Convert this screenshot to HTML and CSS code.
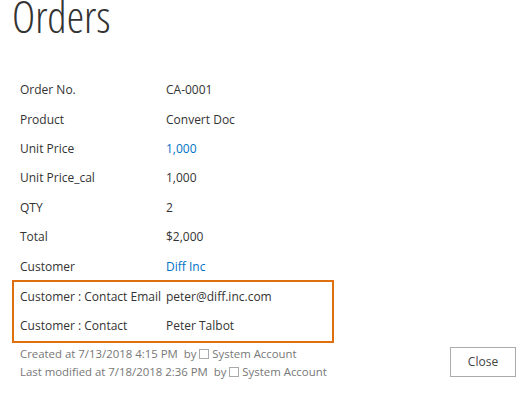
FILE: index.html
```html
<!DOCTYPE html>
<html lang="en">

<head>
  <meta charset="UTF-8">
  <title>Orders</title>
  <link rel="stylesheet" href="styles.css">
</head>

<body>
  <div class="dialog">
    <h1 class="title">Orders</h1>

    <div class="fields">
      <div class="row"><div class="label">Order No.</div><div class="value">CA-0001</div></div>
      <div class="row"><div class="label">Product</div><div class="value">Convert Doc</div></div>
      <div class="row"><div class="label">Unit Price</div><div class="value link">1,000</div></div>
      <div class="row"><div class="label">Unit Price_cal</div><div class="value">1,000</div></div>
      <div class="row"><div class="label">QTY</div><div class="value">2</div></div>
      <div class="row"><div class="label">Total</div><div class="value">$2,000</div></div>
      <div class="row"><div class="label">Customer</div><div class="value link">Diff Inc</div></div>

      <div class="lookup">
        <div class="row"><div class="label">Customer : Contact Email</div><div class="value">peter@diff.inc.com</div></div>
        <div class="row"><div class="label">Customer : Contact</div><div class="value">Peter Talbot</div></div>
      </div>
    </div>

    <div class="footer">
      <div class="meta">
        <div>Created at 7/13/2018 4:15 PM &nbsp;by <span class="box"></span> System Account</div>
        <div>Last modified at 7/18/2018 2:36 PM &nbsp;by <span class="box"></span> System Account</div>
      </div>
      <button class="close">Close</button>
    </div>
  </div>
</body>

</html>
```

FILE: styles.css
```css
body {
  margin: 0;
  background: #fff;
  color: #333;
  font-family: "Open Sans", "Noto Sans", sans-serif;
}

.dialog {
  padding: 0 7px 0 12px;
}

.title {
  margin: 0;
  font-size: 44px;
  font-weight: 300;
  font-stretch: 87.5%;
  line-height: 32px;
  color: #333;
}

.fields {
  margin-top: 43px;
}

.row {
  display: flex;
  height: 29.4px;
  align-items: center;
  font-size: 12px;
  white-space: nowrap;
}

.label {
  width: 154px;
  padding-left: 8px;
  box-sizing: border-box;
  color: #333;
}

.value {
  color: #333;
}

.link {
  color: #0072c6;
}

.lookup {
  width: 318px;
  border: 2px solid #e0700e;
  margin-top: -1px;
}

.lookup .label {
  width: 152px;
  padding-left: 6px;
}

.footer {
  display: flex;
  justify-content: space-between;
  align-items: flex-start;
  margin-top: 2px;
}

.meta {
  font-size: 11.4px;
  line-height: 18px;
  color: #777;
  padding-left: 8px;
}

.box {
  display: inline-block;
  width: 8px;
  height: 8px;
  border: 1px solid #aaa;
  vertical-align: -1px;
}

.close {
  width: 66px;
  height: 30px;
  margin-top: 2px;
  background: #fff;
  border: 1px solid #ababab;
  font-family: inherit;
  font-size: 12px;
  color: #444;
}
```
